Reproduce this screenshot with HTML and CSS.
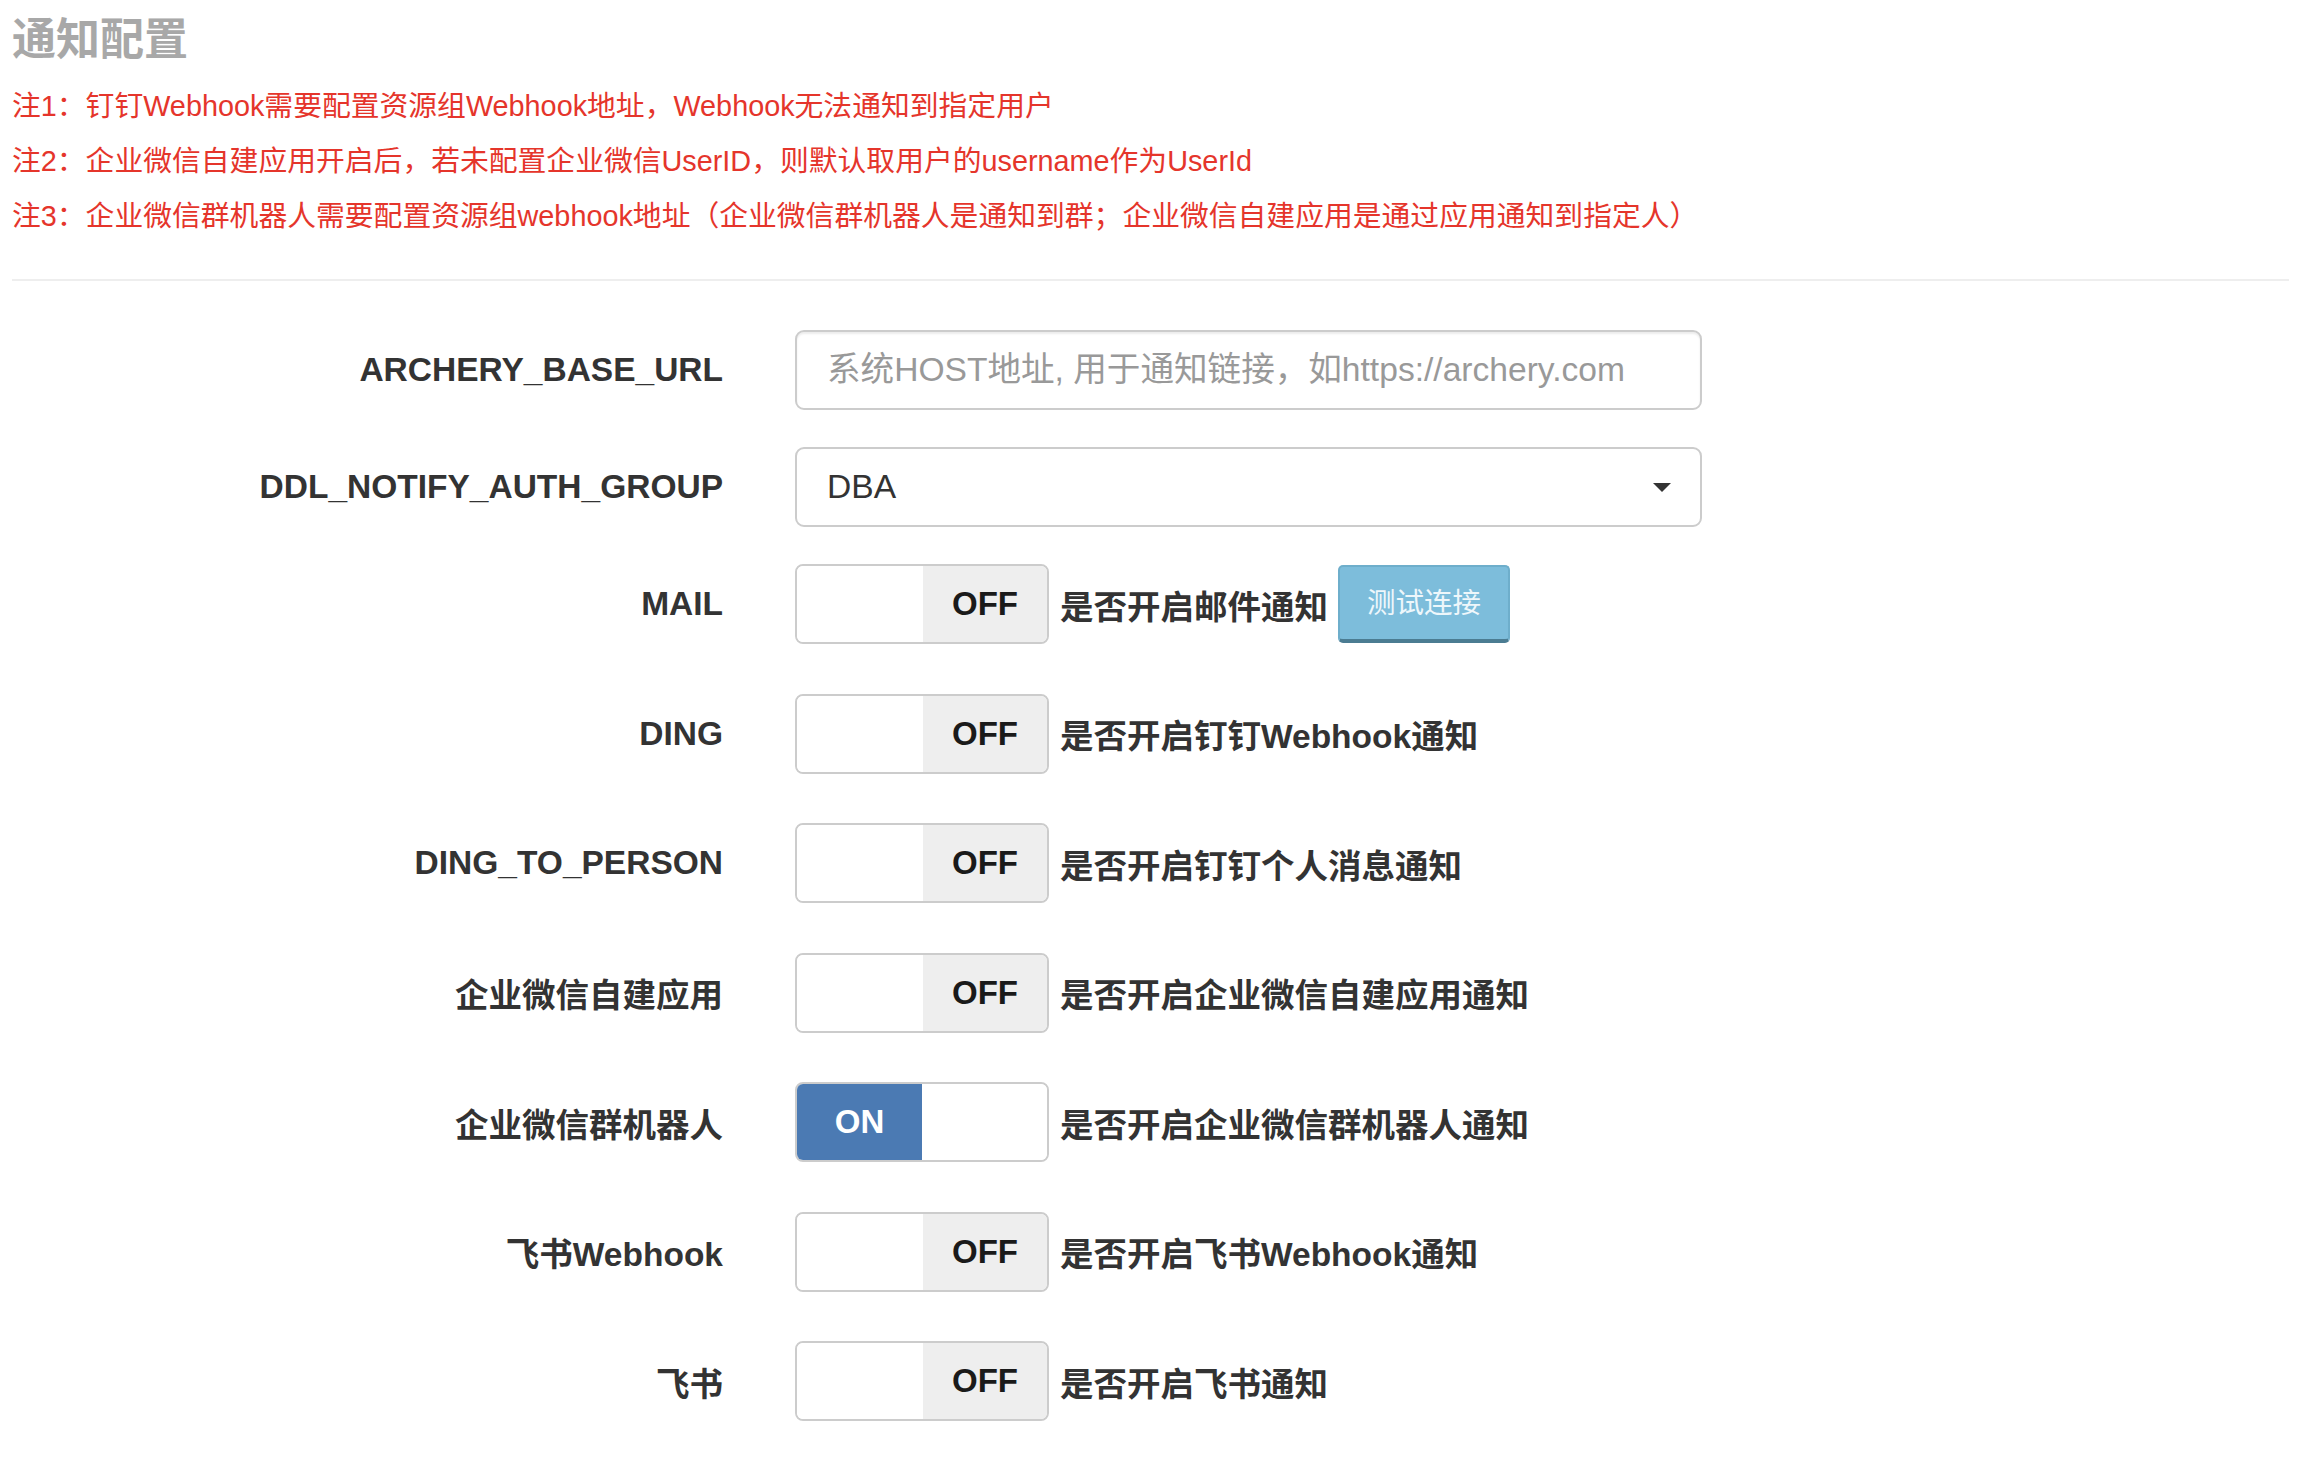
FILE: index.html
```html
<!DOCTYPE html>
<html lang="zh-CN">
<head>
<meta charset="utf-8">
<title>通知配置</title>
<link rel="stylesheet" href="styles.css">
</head>
<body>
<div class="page">
  <h4 class="title">通知配置</h4>
  <div class="notes">
    <p class="note">注1：钉钉Webhook需要配置资源组Webhook地址，Webhook无法通知到指定用户</p>
    <p class="note">注2：企业微信自建应用开启后，若未配置企业微信UserID，则默认取用户的username作为UserId</p>
    <p class="note">注3：企业微信群机器人需要配置资源组webhook地址（企业微信群机器人是通知到群；企业微信自建应用是通过应用通知到指定人）</p>
  </div>
  <hr class="divider">
  <form class="form">
    <div class="row row-field">
      <label class="label">ARCHERY_BASE_URL</label>
      <div class="control">
        <input class="input" type="text" placeholder="系统HOST地址, 用于通知链接，如https://archery.com">
      </div>
    </div>
    <div class="row row-field">
      <label class="label">DDL_NOTIFY_AUTH_GROUP</label>
      <div class="control">
        <div class="select"><span class="select-text">DBA</span><span class="caret"></span></div>
      </div>
    </div>
    <div class="row row-switch">
      <label class="label">MAIL</label>
      <div class="control switch-line">
        <div class="switch"><span class="sw-blank"></span><span class="sw-off">OFF</span></div>
        <span class="desc">是否开启邮件通知</span>
        <button type="button" class="btn-test">测试连接</button>
      </div>
    </div>
    <div class="row row-switch">
      <label class="label">DING</label>
      <div class="control switch-line">
        <div class="switch"><span class="sw-blank"></span><span class="sw-off">OFF</span></div>
        <span class="desc">是否开启钉钉Webhook通知</span>
      </div>
    </div>
    <div class="row row-switch">
      <label class="label">DING_TO_PERSON</label>
      <div class="control switch-line">
        <div class="switch"><span class="sw-blank"></span><span class="sw-off">OFF</span></div>
        <span class="desc">是否开启钉钉个人消息通知</span>
      </div>
    </div>
    <div class="row row-switch">
      <label class="label">企业微信自建应用</label>
      <div class="control switch-line">
        <div class="switch"><span class="sw-blank"></span><span class="sw-off">OFF</span></div>
        <span class="desc">是否开启企业微信自建应用通知</span>
      </div>
    </div>
    <div class="row row-switch">
      <label class="label">企业微信群机器人</label>
      <div class="control switch-line">
        <div class="switch"><span class="sw-on">ON</span><span class="sw-blank"></span></div>
        <span class="desc">是否开启企业微信群机器人通知</span>
      </div>
    </div>
    <div class="row row-switch">
      <label class="label">飞书Webhook</label>
      <div class="control switch-line">
        <div class="switch"><span class="sw-blank"></span><span class="sw-off">OFF</span></div>
        <span class="desc">是否开启飞书Webhook通知</span>
      </div>
    </div>
    <div class="row row-switch">
      <label class="label">飞书</label>
      <div class="control switch-line">
        <div class="switch"><span class="sw-blank"></span><span class="sw-off">OFF</span></div>
        <span class="desc">是否开启飞书通知</span>
      </div>
    </div>
  </form>
</div>
</body>
</html>
```
FILE: styles.css
```css
html, body {
  margin: 0;
  padding: 0;
  background: #ffffff;
}
body {
  font-family: "Liberation Sans", "Noto Sans CJK SC", sans-serif;
  color: #333333;
}
.page {
  padding: 0 19px 0 12px;
}
.title {
  margin: 0;
  font-size: 44px;
  line-height: 79px;
  font-weight: 700;
  color: #a8a8a8;
}
.notes {
  margin: 0;
}
.note {
  margin: 0;
  font-size: 28.8px;
  line-height: 55px;
  color: #e5352b;
  white-space: nowrap;
}
.divider {
  margin: 35px 0 0 0;
  border: 0;
  border-top: 2px solid #eeeeee;
  height: 0;
}
.form {
  margin-top: 49px;
}
.row {
  display: grid;
  grid-template-columns: 711px 907px;
  column-gap: 72px;
  align-items: center;
}
.row-field {
  height: 80px;
  margin-bottom: 37px;
}
.row-switch {
  height: 80px;
  margin-bottom: 49.5px;
}
.label {
  text-align: right;
  font-size: 33.5px;
  font-weight: 700;
  color: #333333;
  white-space: nowrap;
}
.control {
  height: 80px;
}
.input {
  box-sizing: border-box;
  width: 907px;
  height: 80px;
  margin: 0;
  padding: 0 30px;
  border: 2px solid #cccccc;
  border-radius: 9px;
  box-shadow: inset 0 2px 2px rgba(0, 0, 0, 0.075);
  font-family: "Liberation Sans", "Noto Sans CJK SC", sans-serif;
  font-size: 33.6px;
  color: #555555;
  background: #ffffff;
  outline: none;
}
.input::placeholder {
  color: #999999;
}
.select {
  box-sizing: border-box;
  width: 907px;
  height: 80px;
  display: flex;
  align-items: center;
  justify-content: space-between;
  padding: 0 29px 0 30px;
  border: 2px solid #cccccc;
  border-radius: 9px;
  background: #ffffff;
  font-size: 33.6px;
  color: #333333;
}
.caret {
  width: 0;
  height: 0;
  border-top: 9px solid #333333;
  border-left: 9.5px solid transparent;
  border-right: 9.5px solid transparent;
}
.switch-line {
  display: flex;
  align-items: center;
}
.switch {
  box-sizing: border-box;
  flex: none;
  width: 254px;
  height: 80px;
  display: flex;
  border: 2px solid #cccccc;
  border-radius: 8px;
  overflow: hidden;
  background: #ffffff;
}
.sw-blank {
  width: 126px;
  background: #ffffff;
}
.sw-off,
.sw-on {
  width: 124px;
  display: flex;
  align-items: center;
  justify-content: center;
  font-size: 33px;
  font-weight: 700;
}
.sw-off {
  background: #eeeeee;
  color: #1a1a1a;
}
.sw-on {
  background: #4b7ab3;
  color: #ffffff;
  width: 126px;
}
.desc {
  margin-left: 11px;
  font-size: 33.5px;
  font-weight: 700;
  color: #333333;
  white-space: nowrap;
}
.btn-test {
  box-sizing: border-box;
  margin-left: 10px;
  height: 78px;
  padding: 0 27px;
  border: 2px solid #6eaecb;
  border-bottom: 4px solid #4b7c92;
  border-radius: 5px;
  background: #7dbddb;
  color: #eef7fb;
  font-family: "Liberation Sans", "Noto Sans CJK SC", sans-serif;
  font-size: 28.5px;
  line-height: 1;
  cursor: pointer;
}
```
